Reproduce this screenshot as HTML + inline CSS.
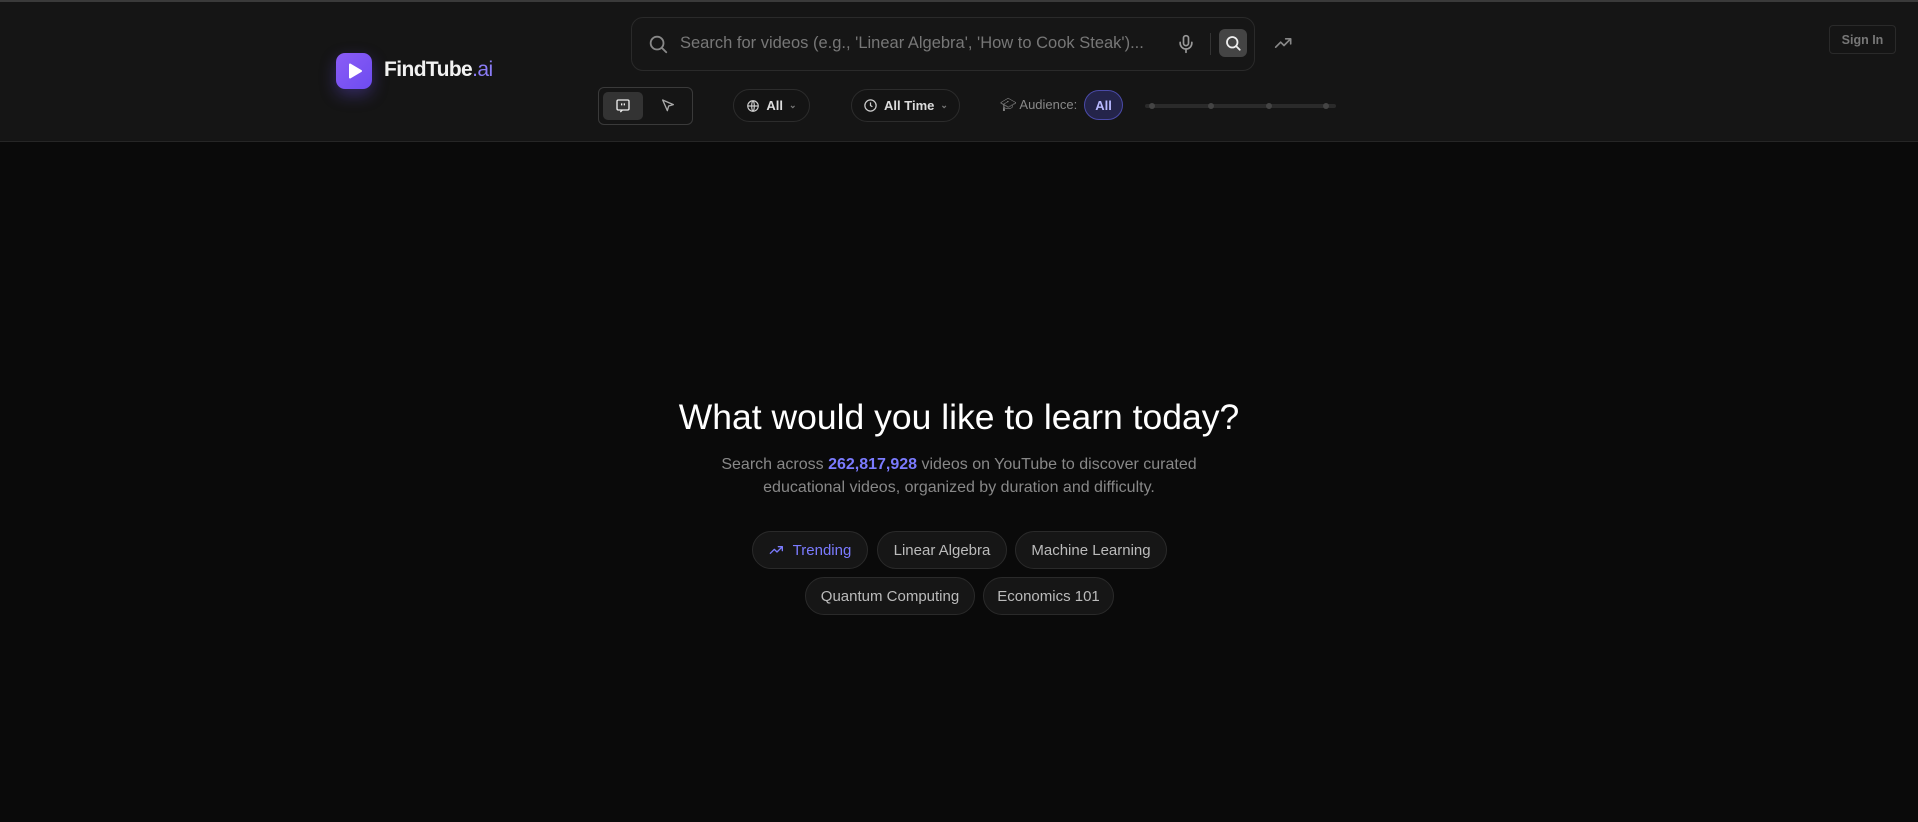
<!DOCTYPE html>
<html><head><meta charset="utf-8"><style>
*{box-sizing:border-box;margin:0;padding:0}
body{width:1918px;height:822px;background:#0a0a0a;font-family:"Liberation Sans",sans-serif;overflow:hidden;position:relative;color:#ddd}
.hdr{position:absolute;left:0;top:0;width:1918px;height:142px;background:#151515;border-top:2px solid #3a3a3a;border-bottom:1px solid #262626}
.abs{position:absolute}
.logo{left:336px;top:53px;width:36px;height:36px;border-radius:9px;background:linear-gradient(135deg,#8b5cf6,#6d4cf0);box-shadow:0 6px 16px rgba(110,80,240,.35)}
.brand{left:384px;top:58px;font-size:21px;font-weight:bold;color:#f2f2f2;letter-spacing:-.6px}
.brand span{color:#8b7cf6;font-weight:normal}
.search{left:631px;top:17px;width:624px;height:54px;border:1px solid #2a2a2a;border-radius:12px;background:#161616}
.ph{left:680px;top:34px;font-size:16.5px;color:#777}
.sbtn{left:1219px;top:29px;width:28px;height:28px;border-radius:6px;background:#444}
.pill{border:1px solid #2c2c2c;border-radius:20px;background:#141414;font-size:13px;font-weight:bold;color:#ddd;display:flex;align-items:center;justify-content:center;gap:6px}
.chip{position:absolute;height:38px;border:1px solid #2a2a2a;border-radius:19px;background:#161616;color:#bbb;font-size:15px;display:flex;align-items:center;justify-content:center;gap:8px}
</style></head><body>
<div class="hdr"></div>
<div class="abs logo"><svg width="36" height="36" viewBox="0 0 36 36"><path d="M14 11.5 L25 18 L14 24.5 Z" fill="#fff" stroke="#fff" stroke-width="2" stroke-linejoin="round"/></svg></div>
<div class="abs brand">FindTube<span>.ai</span></div>
<div class="abs search"></div>
<svg class="abs" style="left:647px;top:33px" width="22" height="22" viewBox="0 0 24 24" fill="none" stroke="#888" stroke-width="2" stroke-linecap="round"><circle cx="11" cy="11" r="7"/><path d="M21 21l-4.3-4.3"/></svg>
<div class="abs ph">Search for videos (e.g., 'Linear Algebra', 'How to Cook Steak')...</div>
<svg class="abs" style="left:1176px;top:33px" width="20" height="22" viewBox="0 0 24 24" fill="none" stroke="#999" stroke-width="2" stroke-linecap="round"><rect x="9" y="2" width="6" height="12" rx="3"/><path d="M5 10v1a7 7 0 0 0 14 0v-1M12 18v4"/></svg>
<div class="abs" style="left:1210px;top:33px;width:1px;height:22px;background:#333"></div>
<div class="abs sbtn"><svg style="margin:5px" width="18" height="18" viewBox="0 0 24 24" fill="none" stroke="#eee" stroke-width="2.4" stroke-linecap="round"><circle cx="11" cy="11" r="7"/><path d="M21 21l-4.3-4.3"/></svg></div>
<svg class="abs" style="left:1274px;top:33px" width="20" height="20" viewBox="0 0 24 24" fill="none" stroke="#888" stroke-width="2" stroke-linecap="round" stroke-linejoin="round"><path d="M2 17l6-6 4 4 8-8M14 7h6v6"/></svg>
<div class="abs" style="left:1829px;top:25px;width:67px;height:29px;border:1px solid #2a2a2a;border-radius:4px;color:#777;font-size:12.5px;font-weight:bold;display:flex;align-items:center;justify-content:center">Sign In</div>
<div class="abs" style="left:598px;top:87px;width:95px;height:38px;border:1px solid #3a3a3a;border-radius:6px;background:#151515"></div>
<div class="abs" style="left:603px;top:92px;width:40px;height:28px;border-radius:5px;background:#333;display:flex;align-items:center;justify-content:center"><svg width="16" height="16" viewBox="0 0 24 24" fill="none" stroke="#eee" stroke-width="2"><rect x="3" y="3" width="18" height="15" rx="2"/><path d="M8 21l3-3M10 8v3M14 8v3"/></svg></div>
<svg class="abs" style="left:660px;top:98px" width="16" height="16" viewBox="0 0 24 24" fill="none" stroke="#aaa" stroke-width="2" stroke-linejoin="round"><path d="M4 3l16 7-7 2-2 7z"/></svg>
<div class="abs pill" style="left:733px;top:89px;width:77px;height:33px"><svg width="14" height="14" viewBox="0 0 24 24" fill="none" stroke="#ccc" stroke-width="2"><circle cx="12" cy="12" r="9"/><path d="M3 12h18M12 3c3 3 3 15 0 18M12 3c-3 3-3 15 0 18"/></svg>All <span style="color:#777;font-size:9px">⌄</span></div>
<div class="abs pill" style="left:851px;top:89px;width:109px;height:33px"><svg width="15" height="15" viewBox="0 0 24 24" fill="none" stroke="#ccc" stroke-width="2"><circle cx="12" cy="12" r="9"/><path d="M12 7v5l3 2"/></svg>All Time <span style="color:#777;font-size:9px">⌄</span></div>
<div class="abs" style="left:1000px;top:97px;font-size:13px;color:#888">🎓︎ Audience:</div>
<div class="abs" style="left:1084px;top:90px;width:39px;height:30px;border:1px solid #4a4aa8;border-radius:15px;background:#24244a;color:#b8b8ff;font-size:13px;font-weight:bold;display:flex;align-items:center;justify-content:center">All</div>
<div class="abs" style="left:1145px;top:104px;width:191px;height:4px;border-radius:2px;background:#2a2a2a"></div>
<div class="abs" style="left:1149px;top:103px;width:6px;height:6px;border-radius:3px;background:#444"></div>
<div class="abs" style="left:1208px;top:103px;width:6px;height:6px;border-radius:3px;background:#444"></div>
<div class="abs" style="left:1266px;top:103px;width:6px;height:6px;border-radius:3px;background:#444"></div>
<div class="abs" style="left:1323px;top:103px;width:6px;height:6px;border-radius:3px;background:#444"></div>
<div class="abs" style="left:0;width:1918px;top:397px;text-align:center;font-size:35.5px;color:#fff">What would you like to learn today?</div>
<div class="abs" style="left:0;width:1918px;top:453px;text-align:center;font-size:16px;line-height:23px;color:#888">Search across <b style="color:#7b7bff">262,817,928</b> videos on YouTube to discover curated<br>educational videos, organized by duration and difficulty.</div>
<div class="chip" style="left:752px;top:531px;width:116px;color:#7b7bff"><svg width="16" height="16" viewBox="0 0 24 24" fill="none" stroke="#7b7bff" stroke-width="2" stroke-linecap="round" stroke-linejoin="round"><path d="M2 17l6-6 4 4 8-8M14 7h6v6"/></svg>Trending</div>
<div class="chip" style="left:877px;top:531px;width:130px">Linear Algebra</div>
<div class="chip" style="left:1015px;top:531px;width:152px">Machine Learning</div>
<div class="chip" style="left:805px;top:577px;width:170px">Quantum Computing</div>
<div class="chip" style="left:983px;top:577px;width:131px">Economics 101</div>
</body></html>
